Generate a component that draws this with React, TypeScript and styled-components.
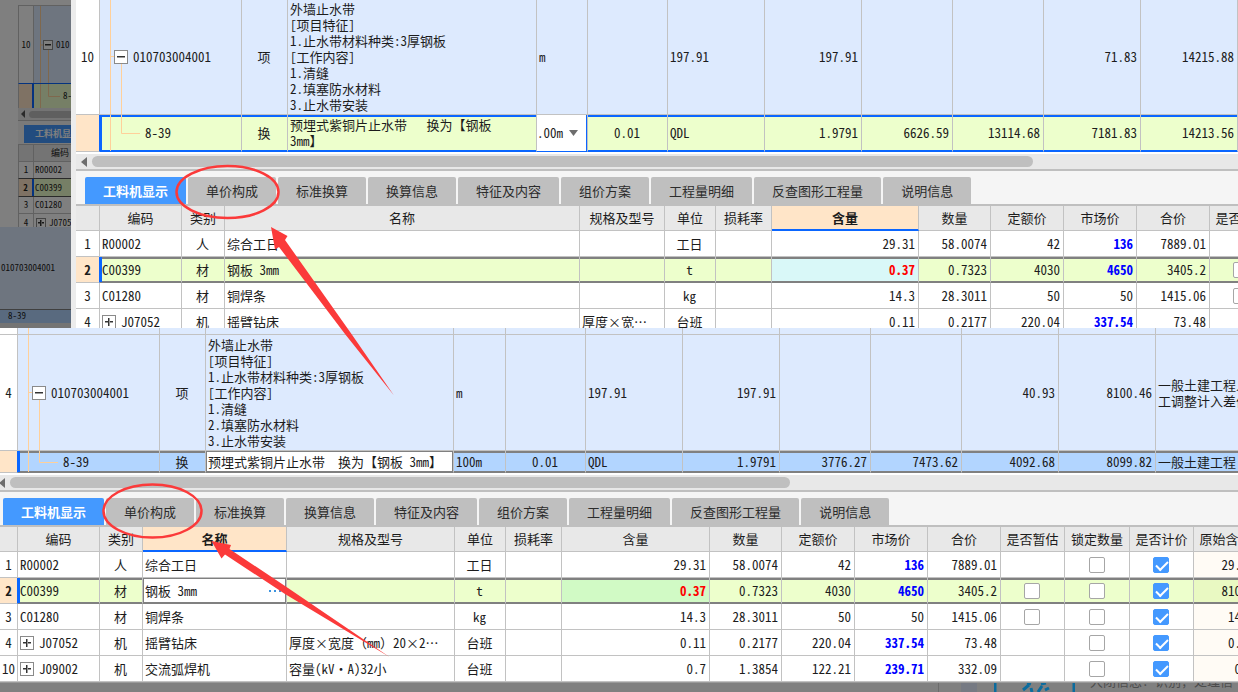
import React from "react";
import styled, { createGlobalStyle, css } from "styled-components";

const c = {
  line: "#c2c2c2",
  dark: "#808080",
  blue: "#0a66ff",
  tab: "#4499ff",
  sheet: "#ddeafe",
  picked: "#b2d5ff",
  green: "#edffcc",
  orange: "#ffe5c8",
  tree: "#ffd09a",
  head: "#e8e8e8",
  bar: "#bfbfbf",
  red: "#fb3a3a",
};

const Global = createGlobalStyle`
  * { box-sizing: border-box; }
  body {
    margin: 0;
    background: #808080;
    color: #1c1c1c;
    font: 13px/16px "Noto Sans Mono CJK SC", "Noto Sans CJK SC", sans-serif;
    overflow-x: hidden;
  }
  button, input, select { font: inherit; color: inherit; }
`;

const Page = styled.main`
  position: relative;
  overflow: hidden;
`;

const Upper = styled.section`
  display: flex;
`;

const Panel = styled.div`
  flex: 1;
  min-width: 0;
  overflow: hidden;
  background: #fff;
`;

const Clip = styled.div<{ $h?: number }>`
  overflow: hidden;
  ${(p) => p.$h && `max-height: ${p.$h}px;`}
`;

const Table = styled.table`
  table-layout: fixed;
  width: 0;
  border-collapse: separate;
  border-spacing: 0;
`;

type CellProps = {
  $align?: "left" | "center" | "right";
  $bg?: string;
  $color?: string;
  $bold?: boolean;
  $wrap?: boolean;
  $flush?: boolean;
};

const Cell = styled.td<CellProps>`
  position: relative;
  padding: 0 ${(p) => (p.$flush ? 0 : 3)}px 0 ${(p) => (p.$flush ? 0 : 2)}px;
  overflow: hidden;
  border-right: 1px solid ${c.line};
  border-bottom: 1px solid ${c.line};
  white-space: ${(p) => (p.$wrap ? "pre-line" : "pre")};
  text-align: ${(p) => p.$align ?? "left"};
  color: ${(p) => p.$color ?? "inherit"};
  font-weight: ${(p) => (p.$bold ? 700 : 400)};
  ${(p) => p.$bg && `background: ${p.$bg};`}
`;

const Num = styled.th<{ $on?: boolean }>`
  padding: 0;
  overflow: hidden;
  border-right: 1px solid ${c.line};
  border-bottom: 1px solid ${c.line};
  background: ${(p) => (p.$on ? c.orange : "#fff")};
  font-weight: ${(p) => (p.$on ? 700 : 400)};
  text-align: center;
`;

const Row = styled.tr<{ $h: number; $bg?: string; $edge?: string }>`
  height: ${(p) => p.$h}px;
  background: ${(p) => p.$bg ?? "#fff"};
  ${(p) =>
    p.$edge &&
    css`
      ${Cell} {
        box-shadow: inset 0 2px ${p.$edge}, inset 0 -1px ${p.$edge};
        border-bottom-color: ${p.$edge};
      }
      ${Cell}:nth-child(2) {
        box-shadow: inset 2px 0 ${c.blue}, inset 0 2px ${p.$edge}, inset 0 -1px ${p.$edge};
      }
      ${Num} {
        border-right-color: ${c.blue};
      }
    `}
`;

const HeadCell = styled.th<{ $on?: boolean }>`
  padding: 0;
  overflow: hidden;
  white-space: nowrap;
  border-right: 1px solid ${c.line};
  border-bottom: ${(p) => (p.$on ? `2px solid ${c.blue}` : `1px solid ${c.line}`)};
  background: ${(p) => (p.$on ? c.orange : c.head)};
  font-weight: ${(p) => (p.$on ? 700 : 400)};
`;

const Toggle = styled.button`
  position: relative;
  flex: none;
  width: 14px;
  height: 14px;
  padding: 0;
  border: 1px solid #8a8a8a;
  background: #fff;
  margin-right: 5px;
  &::before {
    content: "";
    position: absolute;
    left: 2px;
    right: 2px;
    top: 5px;
    height: 1px;
    background: #333;
    box-shadow: 0 1px #9a9a9a;
  }
  &[aria-expanded="false"]::after {
    content: "";
    position: absolute;
    top: 2px;
    bottom: 2px;
    left: 5px;
    width: 1px;
    background: #333;
    box-shadow: 1px 0 #9a9a9a;
  }
`;

const TreeSvg = styled.svg`
  position: absolute;
  left: 0;
  top: 0;
  width: 44px;
  height: 100%;
  fill: none;
  stroke: ${c.tree};
`;

const Indent = styled.span<{ $w: number }>`
  display: flex;
  align-items: center;
  padding-left: ${(p) => p.$w}px;
  position: relative;
  white-space: nowrap;
`;

const ScrollTrack = styled.div`
  display: flex;
  align-items: center;
  height: 17px;
  margin-top: 2px;
  background: ${c.head};
  border-bottom: 2px solid ${c.bar};
  overflow: hidden;
`;

const ScrollArrow = styled.button<{ $w: number }>`
  flex: none;
  width: ${(p) => p.$w}px;
  height: 12px;
  padding: 0 5px 0 0;
  border: 0;
  background: none;
  display: flex;
  justify-content: flex-end;
  svg {
    display: block;
    flex: none;
    width: 6px;
    height: 12px;
    fill: #6e6e6e;
  }
`;

const Thumb = styled.div<{ $pct: number }>`
  width: ${(p) => p.$pct}%;
  height: 11px;
  border-radius: 6px;
  background: ${c.bar};
`;

const TabBar = styled.div<{ $left: number }>`
  display: flex;
  gap: 2px;
  padding: 6px 0 0 ${(p) => p.$left}px;
  background: #f5f5f5;
  border-bottom: 2px solid ${c.bar};
`;

const Tab = styled.button<{ $on?: boolean }>`
  flex: none;
  height: 27px;
  padding: 0 18px;
  border: 0;
  border-radius: 2px 2px 0 0;
  background: ${(p) => (p.$on ? c.tab : c.bar)};
  color: ${(p) => (p.$on ? "#fff" : "#2c2c2c")};
  font-weight: ${(p) => (p.$on ? 700 : 400)};
  white-space: nowrap;
`;

const Check = styled.input`
  appearance: none;
  display: block;
  width: 16px;
  height: 16px;
  margin: 0 auto;
  border: 1px solid #a6a6a6;
  border-radius: 2px;
  background: #fff;
  &:checked {
    border-color: ${c.tab};
    background: ${c.tab};
  }
  &:checked::after {
    content: "";
    display: block;
    width: 10px;
    height: 5px;
    margin: 3px 0 0 2px;
    border: solid #fff;
    border-width: 0 0 2px 2px;
    transform: rotate(-45deg);
  }
`;

const EditBox = styled.div<{ $h: number }>`
  display: flex;
  align-items: center;
  height: ${(p) => p.$h}px;
  border: 1px solid ${c.dark};
  background: #fff;
`;

const Edit = styled.input`
  flex: 1;
  min-width: 0;
  width: 100%;
  padding: 0 0 0 1px;
  border: 0;
  outline: 0;
  background: none;
`;

const More = styled.button`
  flex: none;
  display: flex;
  align-items: center;
  padding: 0 4px;
  border: 0;
  background: none;
  svg {
    width: 12px;
    height: 4px;
    fill: #3d94e0;
  }
`;

const UnitPick = styled.div`
  position: relative;
  display: flex;
  align-items: center;
  height: 36px;
  background: #fff;
  border-right: 1px solid ${c.blue};
  svg {
    position: absolute;
    right: 8px;
    width: 9px;
    height: 6px;
    fill: #6d6d6d;
    pointer-events: none;
  }
`;

const Select = styled.select`
  appearance: none;
  width: 100%;
  padding: 0;
  border: 0;
  background: none;
`;

/* Dimmed earlier window behind the upper panel */
const Behind = styled.aside`
  position: relative;
  flex: none;
  display: flex;
  flex-direction: column;
  width: 76px;
  border-right: 5px solid #ececec;
  overflow: hidden;
  background: #fff;
  font-size: 9px;
  line-height: 12px;
  &::after {
    content: "";
    position: absolute;
    inset: 0;
    background: rgba(0, 0, 0, 0.5);
  }
`;

const BehindTop = styled.div`
  height: 227px;
  padding-top: 5px;
  overflow: hidden;
`;

const MiniRow = styled.div<{ $h: number; $bg?: string; $edge?: string }>`
  display: flex;
  height: ${(p) => p.$h}px;
  margin-left: 18px;
  background: ${(p) => p.$bg ?? "#fff"};
  border-top: 1px solid ${(p) => p.$edge ?? c.line};
  border-left: 1px solid ${c.line};
  white-space: nowrap;
`;

const MiniNum = styled.span<{ $on?: boolean; $bg?: string }>`
  flex: none;
  display: flex;
  align-items: center;
  justify-content: center;
  width: 15px;
  background: ${(p) => p.$bg ?? (p.$on ? c.orange : "#fff")};
  border-right: ${(p) => (p.$on ? `2px solid ${c.blue}` : `1px solid ${c.line}`)};
  font-weight: ${(p) => (p.$on ? 700 : 400)};
`;

const MiniText = styled.span<{ $left: number }>`
  position: relative;
  flex: 1;
  display: flex;
  align-items: center;
  padding-left: ${(p) => p.$left}px;
`;

const MiniToggle = styled(Toggle)`
  width: 10px;
  height: 10px;
  margin-right: 3px;
  &::before {
    left: 1px;
    right: 1px;
    top: 3px;
  }
  &[aria-expanded="false"]::after {
    top: 1px;
    bottom: 1px;
    left: 3px;
  }
`;

const MiniScroll = styled.div`
  display: flex;
  align-items: center;
  height: 13px;
  margin-left: 18px;
  padding-left: 3px;
  background: ${c.head};
  border-bottom: 1px solid ${c.bar};
  svg {
    flex: none;
    width: 4px;
    height: 8px;
    margin-right: 4px;
    fill: #555;
  }
  i {
    flex: 1;
    height: 7px;
    border-radius: 4px 0 0 4px;
    background: ${c.bar};
  }
`;

const MiniTabs = styled.div`
  height: 23px;
  margin-left: 18px;
  padding: 4px 0 0 6px;
  background: #f5f5f5;
`;

const MiniTab = styled.button`
  width: 100%;
  height: 18px;
  padding: 0 0 0 11px;
  border: 0;
  background: ${c.tab};
  color: #fff;
  font-weight: 700;
  text-align: left;
  white-space: nowrap;
`;

const BehindSheet = styled.div`
  flex: 1;
  display: flex;
  align-items: center;
  padding-left: 1px;
  background: ${c.sheet};
`;

const BehindPicked = styled.div`
  height: 14px;
  padding-left: 8px;
  background: ${c.picked};
  border-top: 1px solid ${c.dark};
`;

const BehindEnd = styled.div`
  height: 5px;
  background: ${c.head};
`;

const Under = styled.footer`
  display: flex;
  justify-content: flex-end;
  height: 10px;
  overflow: hidden;
  background: #808080;
  border-top: 1px solid #9a9a9a;
  color: #4c4c4c;
`;

const UnderLine = styled.span`
  width: 39px;
  border-left: 1px solid #6c6c6c;
  border-right: 16px solid #767a83;
`;

const UnderIcon = styled.svg`
  width: 81px;
  height: 10px;
  margin: 0 15px 0 17px;
  fill: none;
  stroke: #0c6c9e;
  stroke-width: 3;
`;

const UnderText = styled.span`
  flex: none;
  width: 148px;
  height: 16px;
  margin-top: -10px;
  overflow: hidden;
  white-space: nowrap;
`;

const Marks = styled.svg`
  position: absolute;
  left: 0;
  top: 0;
  width: 100%;
  height: 100%;
  pointer-events: none;
  ellipse {
    fill: none;
    stroke: ${c.red};
    stroke-width: 2.5;
  }
  polygon {
    fill: ${c.red};
  }
`;

const Cols = ({ w }: { w: number[] }) => (
  <colgroup>
    {w.map((x, i) => (
      <col key={i} width={x} />
    ))}
  </colgroup>
);

const feature =
  "外墙止水带\n[项目特征]\n1.止水带材料种类:3厚钢板\n[工作内容]\n1.清缝\n2.填塞防水材料\n3.止水带安装";

const tabNames = ["工料机显示", "单价构成", "标准换算", "换算信息", "特征及内容", "组价方案", "工程量明细", "反查图形工程量", "说明信息"];

const Tabs = ({ left }: { left: number }) => (
  <TabBar $left={left} role="tablist">
    {tabNames.map((t, i) => (
      <Tab key={t} role="tab" aria-selected={i === 0} $on={i === 0}>
        {t}
      </Tab>
    ))}
  </TabBar>
);

const Scroll = ({ lead, pct }: { lead: number; pct: number }) => (
  <ScrollTrack>
    <ScrollArrow $w={lead} aria-label="向左滚动">
      <svg viewBox="0 0 6 12">
        <path d="M6 1v10L0 6z" />
      </svg>
    </ScrollArrow>
    <Thumb $pct={pct} />
  </ScrollTrack>
);

const TreeTop = ({ h }: { h: number }) => (
  <TreeSvg>
    <path d={`M10.5 0V${h}M10.5 ${Math.floor(h / 2) - 1}.5H15M21.5 ${Math.floor(h / 2) + 6}V${h}`} />
  </TreeSvg>
);

const TreeLeaf = ({ h }: { h: number }) => (
  <TreeSvg>
    <path d={`M10.5 0V${h}M21.5 0V${Math.floor(h / 2)}.5H40`} />
  </TreeSvg>
);

type Item = {
  no: string;
  code: string;
  kind: string;
  name: string;
  spec?: string;
  unit: string;
  amount: string;
  qty: string;
  fixed: string;
  market: string;
  hot?: boolean;
  total: string;
  estimate?: boolean;
  origin: string;
};

const items: Item[] = [
  { no: "1", code: "R00002", kind: "人", name: "综合工日", unit: "工日", amount: "29.31", qty: "58.0074", fixed: "42", market: "136", hot: true, total: "7889.01", origin: "29.31" },
  { no: "2", code: "C00399", kind: "材", name: "钢板 3mm", unit: "t", amount: "0.37", qty: "0.7323", fixed: "4030", market: "4650", hot: true, total: "3405.2", estimate: true, origin: "810.0" },
  { no: "3", code: "C01280", kind: "材", name: "铜焊条", unit: "kg", amount: "14.3", qty: "28.3011", fixed: "50", market: "50", total: "1415.06", estimate: true, origin: "14.3" },
  { no: "4", code: "J07052", kind: "机", name: "摇臂钻床", spec: "厚度×宽度（mm）20×2⋯", unit: "台班", amount: "0.11", qty: "0.2177", fixed: "220.04", market: "337.54", hot: true, total: "73.48", origin: "0.11" },
  { no: "10", code: "J09002", kind: "机", name: "交流弧焊机", spec: "容量(kV·A)32小", unit: "台班", amount: "0.7", qty: "1.3854", fixed: "122.21", market: "239.71", hot: true, total: "332.09", origin: "0.7" },
];

const Grid = ({ widths, active, rows, full }: { widths: number[]; active: string; rows: Item[]; full?: boolean }) => {
  const heads = ["编码", "类别", "名称", "规格及型号", "单位", "损耗率", "含量", "数量", "定额价", "市场价", "合价", "是否暂估"];
  if (full) heads.push("锁定数量", "是否计价", "原始含量");
  return (
    <Table>
      <Cols w={widths} />
      <thead>
        <Row $h={25}>
          <HeadCell />
          {heads.map((h) => (
            <HeadCell key={h} $on={h === active}>
              {h}
            </HeadCell>
          ))}
        </Row>
      </thead>
      <tbody>
        {rows.map((r) => {
          const on = r.no === "2";
          const editing = on && full;
          return (
            <Row key={r.no} $h={26} $bg={on ? c.green : undefined} $edge={on ? c.dark : undefined}>
              <Num $on={on}>{r.no}</Num>
              <Cell>
                <Indent $w={0}>
                  {r.code[0] === "J" && <Toggle aria-expanded={false} aria-label={`展开 ${r.code}`} />}
                  {r.code}
                </Indent>
              </Cell>
              <Cell $align="center">{r.kind}</Cell>
              <Cell $flush={editing}>
                {editing ? (
                  <EditBox $h={25}>
                    <Edit aria-label="名称" defaultValue={r.name} />
                    <More aria-label="更多">
                      <svg viewBox="0 0 12 4">
                        <path d="M0 1h2v2H0zM5 1h2v2H5zM10 1h2v2h-2z" />
                      </svg>
                    </More>
                  </EditBox>
                ) : (
                  r.name
                )}
              </Cell>
              <Cell>{full ? r.spec : r.spec && "厚度×宽⋯"}</Cell>
              <Cell $align="center">{r.unit}</Cell>
              <Cell />
              <Cell $align="right" $bold={on} $color={on ? "#ff0000" : undefined} $bg={on ? (full ? "#d1fac5" : "#d9f8f8") : undefined}>
                {r.amount}
              </Cell>
              <Cell $align="right">{r.qty}</Cell>
              <Cell $align="right">{r.fixed}</Cell>
              <Cell $align="right" $bold={r.hot} $color={r.hot ? "#0000ff" : undefined}>
                {r.market}
              </Cell>
              <Cell $align="right">{r.total}</Cell>
              <Cell>{r.estimate && <Check type="checkbox" aria-label="是否暂估" />}</Cell>
              {full && (
                <>
                  <Cell>
                    <Check type="checkbox" aria-label="锁定数量" />
                  </Cell>
                  <Cell>
                    <Check type="checkbox" aria-label="是否计价" defaultChecked />
                  </Cell>
                  <Cell $align="right" $bg={on ? "#e9f9c2" : "#fffbf5"}>
                    {r.origin}
                  </Cell>
                </>
              )}
            </Row>
          );
        })}
      </tbody>
    </Table>
  );
};

const UpperSheet = () => (
  <Table>
    <Cols w={[24, 142, 46, 249, 51, 80, 97, 97, 91, 91, 97, 97]} />
    <tbody>
      <Row $h={115} $bg={c.sheet}>
        <Num>10</Num>
        <Cell>
          <TreeTop h={115} />
          <Indent $w={12}>
            <Toggle aria-expanded aria-label="折叠" />
            010703004001
          </Indent>
        </Cell>
        <Cell $align="center">项</Cell>
        <Cell $wrap>{feature}</Cell>
        <Cell>m</Cell>
        <Cell />
        <Cell>197.91</Cell>
        <Cell $align="right">197.91</Cell>
        <Cell />
        <Cell />
        <Cell $align="right">71.83</Cell>
        <Cell $align="right">14215.88</Cell>
      </Row>
      <Row $h={36} $bg={c.green} $edge={c.blue}>
        <Num $on />
        <Cell>
          <TreeLeaf h={36} />
          <Indent $w={43}>8-39</Indent>
        </Cell>
        <Cell $align="center">换</Cell>
        <Cell $wrap>{"预埋式紫铜片止水带\u00a0\u00a0 换为【钢板\n3mm】"}</Cell>
        <Cell $flush>
          <UnitPick>
            <Select aria-label="单位" defaultValue="a">
              <option value="a">.00m</option>
            </Select>
            <svg viewBox="0 0 9 6">
              <path d="M0 0h9L4.500 6z" />
            </svg>
          </UnitPick>
        </Cell>
        <Cell $align="center">0.01</Cell>
        <Cell>QDL</Cell>
        <Cell $align="right">1.9791</Cell>
        <Cell $align="right">6626.59</Cell>
        <Cell $align="right">13114.68</Cell>
        <Cell $align="right">7181.83</Cell>
        <Cell $align="right">14213.56</Cell>
      </Row>
    </tbody>
  </Table>
);

const sheetCols = [18, 142, 46, 248, 52, 80, 97, 97, 91, 91, 97, 97, 140];

const LowerSheet = () => (
  <Table>
    <Cols w={sheetCols} />
    <tbody>
      <Row $h={7} $bg={c.sheet}>
        <Num />
        <Cell>
          <TreeSvg>
            <path d="M10.500 0V7" />
          </TreeSvg>
        </Cell>
        {sheetCols.slice(2).map((_, i) => (
          <Cell key={i} />
        ))}
      </Row>
      <Row $h={116} $bg={c.sheet}>
        <Num>4</Num>
        <Cell>
          <TreeTop h={116} />
          <Indent $w={12}>
            <Toggle aria-expanded aria-label="折叠" />
            010703004001
          </Indent>
        </Cell>
        <Cell $align="center">项</Cell>
        <Cell $wrap>{feature}</Cell>
        <Cell>m</Cell>
        <Cell />
        <Cell>197.91</Cell>
        <Cell $align="right">197.91</Cell>
        <Cell />
        <Cell />
        <Cell $align="right">40.93</Cell>
        <Cell $align="right">8100.46</Cell>
        <Cell>{"一般土建工程人\n工调整计入差价"}</Cell>
      </Row>
      <Row $h={22} $bg={c.picked} $edge={c.dark}>
        <Num $on />
        <Cell>
          <TreeLeaf h={22} />
          <Indent $w={43}>8-39</Indent>
        </Cell>
        <Cell $align="center">换</Cell>
        <Cell $flush>
          <EditBox $h={21}>
            <Edit aria-label="名称" defaultValue={"预埋式紫铜片止水带  换为【钢板 3mm】"} />
          </EditBox>
        </Cell>
        <Cell>100m</Cell>
        <Cell $align="center">0.01</Cell>
        <Cell>QDL</Cell>
        <Cell $align="right">1.9791</Cell>
        <Cell $align="right">3776.27</Cell>
        <Cell $align="right">7473.62</Cell>
        <Cell $align="right">4092.68</Cell>
        <Cell $align="right">8099.82</Cell>
        <Cell>一般土建工程</Cell>
      </Row>
    </tbody>
  </Table>
);

const BehindWindow = () => (
  <Behind>
    <BehindTop>
      <MiniRow $h={78} $bg={c.sheet}>
        <MiniNum>10</MiniNum>
        <MiniText $left={9}>
          <TreeSvg>
            <path d="M6.500 0V78M6.500 39H9M14.500 44V78" />
          </TreeSvg>
          <MiniToggle aria-expanded aria-label="折叠" />
          010
        </MiniText>
      </MiniRow>
      <MiniRow $h={25} $bg={c.green} $edge={c.blue}>
        <MiniNum $on />
        <MiniText $left={29}>
          <TreeSvg>
            <path d="M6.500 0V24M14.500 0V12.500H26" />
          </TreeSvg>
          8-
        </MiniText>
      </MiniRow>
      <MiniScroll>
        <svg viewBox="0 0 4 8">
          <path d="M4 0v8L0 4z" />
        </svg>
        <i />
      </MiniScroll>
      <MiniTabs>
        <MiniTab>工料机显</MiniTab>
      </MiniTabs>
      <MiniRow $h={17} $bg={c.head}>
        <MiniNum $bg={c.head} />
        <MiniText $left={17}>编码</MiniText>
      </MiniRow>
      <MiniRow $h={17}>
        <MiniNum>1</MiniNum>
        <MiniText $left={1}>R00002</MiniText>
      </MiniRow>
      <MiniRow $h={18} $bg={c.green} $edge="#555">
        <MiniNum $on>2</MiniNum>
        <MiniText $left={1}>C00399</MiniText>
      </MiniRow>
      <MiniRow $h={17} $edge="#555">
        <MiniNum>3</MiniNum>
        <MiniText $left={1}>C01280</MiniText>
      </MiniRow>
      <MiniRow $h={18}>
        <MiniNum>4</MiniNum>
        <MiniText $left={2}>
          <MiniToggle aria-expanded={false} aria-label="展开" />
          J0705
        </MiniText>
      </MiniRow>
    </BehindTop>
    <BehindSheet>010703004001</BehindSheet>
    <BehindPicked>8-39</BehindPicked>
    <BehindEnd />
  </Behind>
);

export default function App() {
  return (
    <Page>
      <Global />
      <Upper>
        <BehindWindow />
        <Panel>
          <UpperSheet />
          <Scroll lead={16} pct={81} />
          <Tabs left={9} />
          <Clip $h={122}>
            <Grid widths={[24, 82, 43, 355, 85, 51, 56, 147, 72, 73, 73, 73, 64]} active="含量" rows={items.slice(0, 4)} />
          </Clip>
        </Panel>
      </Upper>
      <Panel>
        <LowerSheet />
        <Scroll lead={10} pct={63} />
        <Tabs left={3} />
        <Grid full widths={[18, 82, 43, 144, 168, 51, 56, 148, 72, 73, 73, 73, 64, 65, 64, 64]} active="名称" rows={items} />
      </Panel>
      <Under>
        <UnderLine />
        <UnderIcon viewBox="0 0 81 10">
          <path d="M1 0V10M80 0V10M29 7l6-5M38 9l-1-4M47 1l5-1M44 9l4-6M51 7l4-2M33 0l4 1" />
        </UnderIcon>
        <UnderText>大闭信息: 识别, 处理信</UnderText>
      </Under>
      <Marks>
        <ellipse cx="227.500" cy="192" rx="51" ry="26" />
        <polygon points="271,227 287.500,236 285,240 351.500,334 394,395.500 345,334 279,247 275,249.500" />
        <ellipse cx="152.500" cy="511" rx="49" ry="26.500" />
        <polygon points="211.500,541 231,545 229.500,549 288,588 389.500,657 285,594 225,554.500 221.500,558.500" />
      </Marks>
    </Page>
  );
}
